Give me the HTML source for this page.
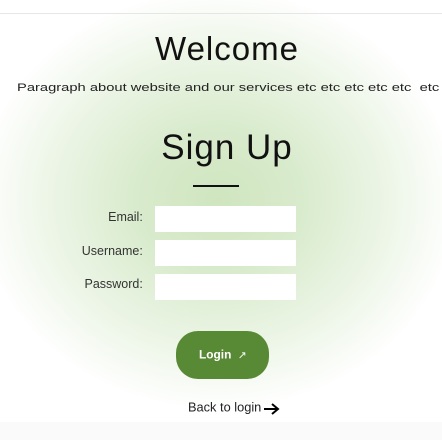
<!DOCTYPE html>
<html><head><meta charset="utf-8"><style>
html,body{margin:0;padding:0;-webkit-text-size-adjust:none;text-size-adjust:none}
body{width:442px;height:440px;overflow:hidden;position:relative;background:#fff;font-family:"Liberation Sans",sans-serif;color:#111}
.bg{position:absolute;left:0;top:0;width:442px;height:440px;background:radial-gradient(ellipse 240px 210px at 218px 200px,#cfe5bf 0%,#d9ebcd 35%,#ecf5e6 70%,rgba(255,255,255,0) 100%)}
.bot{position:absolute;left:0;top:422px;width:442px;height:18px;background:#fafafa}
.line{position:absolute;left:0;top:13px;width:442px;height:1px;background:#e6e6e6}
.a{position:absolute;white-space:nowrap;transform-origin:0 0}
h1{position:absolute;margin:0;font-weight:normal;left:12px;width:430px;text-align:center;letter-spacing:1px}
.lab{position:absolute;width:160px;left:18px;font-size:16px;color:#333;text-align:right;transform-origin:0 0;transform:scale(0.78)}
.inp{position:absolute;left:155px;width:141px;height:26px;background:#fff}
.clip{position:absolute;left:0;top:78px;width:442px;height:20px;overflow:hidden}
</style></head><body>
<div class="bg"></div><div class="bot"></div><div class="line"></div>
<h1 style="top:30px;font-size:33px;">Welcome</h1>
<div class="clip"><div class="a" style="left:17px;top:4px;font-size:16px;color:#222;transform:scale(0.92,0.7)">Paragraph about website and our services etc etc etc etc etc&nbsp; etc etc&nbsp; etc etc</div></div>
<h1 style="top:128px;font-size:35px;">Sign Up</h1>
<div class="a" style="left:193px;top:185px;width:46px;height:2px;background:#111"></div>
<div class="lab" style="top:211px">Email:</div>
<div class="lab" style="top:245px">Username:</div>
<div class="lab" style="top:278px">Password:</div>
<div class="inp" style="top:206px"></div>
<div class="inp" style="top:240px"></div>
<div class="inp" style="top:274px"></div>
<div class="a" style="left:176px;top:331px;width:93px;height:48px;border-radius:22px;background:#588934"></div>
<div class="a" style="left:199px;top:348px;font-size:18px;font-weight:bold;color:#fff;transform:scale(0.66)">Login&nbsp;&nbsp;<span style="font-weight:normal;font-size:16px">↗</span></div>
<div class="a" style="left:188px;top:401px;font-size:16px;color:#222;transform:scale(0.8)">Back to login</div>
<svg class="a" style="left:263px;top:402px" width="18" height="14" viewBox="0 0 18 14"><path d="M1 7H15M9 2L15 7L9 12" fill="none" stroke="#000" stroke-width="2"/></svg>
</body></html>
